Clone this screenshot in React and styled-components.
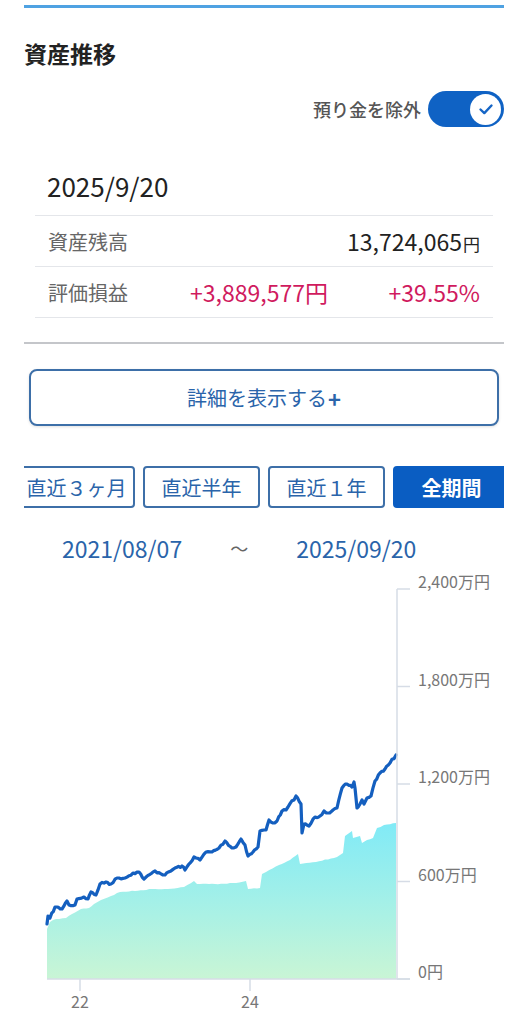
import React from "react";
import styled, { createGlobalStyle } from "styled-components";

const GlobalStyle = createGlobalStyle`
  body {
    margin: 0;
    background: #fff;
    font-family: "Noto Sans CJK JP", "Noto Sans", sans-serif;
    color: #222;
  }
`;

const BLUE = "#2a64aa";

const linePoints = [
  [47, 923], [48, 915], [50, 917], [55, 906], [62, 908], [67, 900], [69, 904],
  [75, 904], [77, 898], [84, 896], [88, 898], [91, 891], [96, 894], [100, 883],
  [106, 881], [111, 883], [117, 877], [125, 877], [133, 872], [139, 871],
  [144, 878], [155, 870], [165, 874], [175, 867], [182, 865], [185, 869],
  [194, 856], [200, 859], [206, 851], [212, 851], [219, 847], [225, 840],
  [232, 847], [236, 846], [241, 838], [245, 844], [248, 855], [253, 851],
  [258, 846], [260, 830], [266, 829], [269, 819], [273, 822], [277, 820],
  [282, 810], [286, 809], [296, 795], [301, 803], [302, 832], [304, 823],
  [309, 825], [315, 816], [320, 815], [324, 810], [328, 812], [333, 809],
  [337, 807], [342, 787], [347, 783], [352, 786], [354, 781], [355, 787],
  [357, 807], [360, 803], [362, 799], [364, 803], [367, 797], [371, 795],
  [375, 780], [380, 772], [385, 768], [390, 762], [396, 754],
];

const areaPoints = [
  [47, 928], [50, 921], [56, 918], [66, 917], [72, 913], [81, 908], [89, 907],
  [94, 903], [101, 899], [111, 895], [120, 891], [135, 890], [152, 888],
  [168, 888], [184, 886], [194, 880], [197, 883], [215, 883], [236, 882],
  [246, 880], [248, 888], [260, 887], [262, 873], [266, 871], [279, 864],
  [290, 859], [298, 853], [300, 863], [316, 861], [337, 856], [343, 852],
  [345, 835], [352, 830], [353, 837], [360, 835], [362, 842], [367, 839],
  [373, 837], [377, 827], [384, 824], [396, 822],
];

// small seeded jitter so the line looks like daily data
const jitter = (pts, step, amp) => {
  let seed = 7;
  const rnd = () => {
    seed = (seed * 16807) % 2147483647;
    return seed / 2147483647 - 0.5;
  };
  const out = [];
  for (let i = 0; i < pts.length - 1; i++) {
    const [x1, y1] = pts[i];
    const [x2, y2] = pts[i + 1];
    const n = Math.max(1, Math.round((x2 - x1) / step));
    for (let k = 0; k < n; k++) {
      const t = k / n;
      const noise = k === 0 ? 0 : rnd() * amp;
      out.push([x1 + (x2 - x1) * t, y1 + (y2 - y1) * t + noise]);
    }
  }
  out.push(pts[pts.length - 1]);
  return out;
};

const toPath = (pts) =>
  pts.map(([x, y], i) => `${i ? "L" : "M"}${x.toFixed(1)} ${y.toFixed(1)}`).join(" ");

const yTicks = [
  { v: "2,400万円", y: 588 },
  { v: "1,800万円", y: 685.5 },
  { v: "1,200万円", y: 783 },
  { v: "600万円", y: 880.5 },
  { v: "0円", y: 978 },
];

const xTicks = [
  { v: "22", x: 80 },
  { v: "24", x: 250 },
];

const tabs = ["直近３ヶ月", "直近半年", "直近１年", "全期間"];

const App = () => {
  const line = toPath(jitter(linePoints, 2, 2.2));
  const area =
    toPath(jitter(areaPoints, 3, 0.8)) + " L396 978 L47 978 Z";

  return (
    <>
      <GlobalStyle />
      <Page>
        <TopBar />
        <Title>資産推移</Title>
        <ToggleRow>
          <ToggleLabel>預り金を除外</ToggleLabel>
          <Toggle>
            <Knob>
              <svg width="20" height="20" viewBox="0 0 20 20">
                <path
                  d="M4.5 10.5l3.8 3.6 7.2-7.6"
                  fill="none"
                  stroke="#1565c6"
                  strokeWidth="2.4"
                  strokeLinecap="round"
                  strokeLinejoin="round"
                />
              </svg>
            </Knob>
          </Toggle>
        </ToggleRow>

        <Card>
          <DateRow>2025/9/20</DateRow>
          <Row>
            <Label>資産残高</Label>
            <Amount>
              13,724,065<Yen>円</Yen>
            </Amount>
          </Row>
          <Row>
            <Label>評価損益</Label>
            <Amount $gain>+3,889,577円</Amount>
            <Amount $gain $wide>
              +39.55%
            </Amount>
          </Row>
        </Card>

        <Separator />

        <DetailButton>
          詳細を表示する<Plus>+</Plus>
        </DetailButton>

        <TabStrip>
          <TabTrack>
            {tabs.map((t, i) => (
              <Tab key={t} $active={i === tabs.length - 1}>
                {t}
              </Tab>
            ))}
          </TabTrack>
        </TabStrip>

        <RangeRow>
          <span>2021/08/07</span>
          <Tilde>〜</Tilde>
          <span>2025/09/20</span>
        </RangeRow>

        <Chart width="480" height="463" viewBox="24 561 480 463">
          <defs>
            <linearGradient id="fill" x1="0" y1="820" x2="0" y2="978" gradientUnits="userSpaceOnUse">
              <stop offset="0" stopColor="#80eaf7" />
              <stop offset="0.5" stopColor="#a3f0e8" />
              <stop offset="1" stopColor="#c9f5d5" />
            </linearGradient>
          </defs>
          <path d={area} fill="url(#fill)" />
          <path
            d={line}
            fill="none"
            stroke="#145fbf"
            strokeWidth="3.2"
            strokeLinejoin="round"
            strokeLinecap="round"
          />
          <line x1="397" y1="588" x2="397" y2="978" stroke="#d6dce6" strokeWidth="1.5" />
          <line x1="47" y1="978" x2="410" y2="978" stroke="#d6dce6" strokeWidth="1.5" />
          {yTicks.map((t) => (
            <g key={t.v}>
              <line x1="397" y1={t.y} x2="410" y2={t.y} stroke="#d6dce6" strokeWidth="1.5" />
              <AxisText x="418" y={t.y - 8} dominantBaseline="central">
                {t.v}
              </AxisText>
            </g>
          ))}
          {xTicks.map((t) => (
            <g key={t.v}>
              <line x1={t.x} y1="978" x2={t.x} y2="990" stroke="#d6dce6" strokeWidth="1.5" />
              <AxisText x={t.x} y="1000" textAnchor="middle" dominantBaseline="central">
                {t.v}
              </AxisText>
            </g>
          ))}
        </Chart>
      </Page>
    </>
  );
};

export default App;

const Page = styled.div`
  width: 480px;
  padding: 0 24px;
`;

const TopBar = styled.div`
  height: 3px;
  margin-top: 5px;
  background: #4fa2e2;
`;

const Title = styled.h1`
  margin: 30px 0 0;
  font-size: 23px;
  line-height: 30px;
  font-weight: bold;
  color: #222;
`;

const ToggleRow = styled.div`
  margin-top: 23px;
  display: flex;
  justify-content: flex-end;
  align-items: center;
  gap: 7px;
`;

const ToggleLabel = styled.span`
  font-size: 18px;
  font-weight: 500;
  color: #555;
`;

const Toggle = styled.div`
  width: 76px;
  height: 36px;
  border-radius: 18px;
  background: #0f62c4;
  display: flex;
  justify-content: flex-end;
  align-items: center;
  padding-right: 3px;
  box-sizing: border-box;
`;

const Knob = styled.div`
  width: 31px;
  height: 31px;
  border-radius: 50%;
  background: #fff;
  display: flex;
  align-items: center;
  justify-content: center;
`;

const Card = styled.div`
  margin: 12px 11px 0;
`;

const DateRow = styled.div`
  padding: 30px 12px 12px;
  font-size: 26px;
  line-height: 34px;
  color: #222;
  border-bottom: 1px solid #e4e6ea;
`;

const Row = styled.div`
  height: 50px;
  padding: 0 13px 0 13px;
  display: flex;
  align-items: center;
  border-bottom: 1px solid #e4e6ea;
`;

const Label = styled.span`
  flex: 1;
  font-size: 20px;
  color: #666;
`;

const Amount = styled.span`
  font-size: 23px;
  color: ${({ $gain }) => ($gain ? "#d01a5e" : "#222")};
  width: ${({ $wide }) => ($wide ? "152px" : "auto")};
  text-align: right;
`;

const Yen = styled.span`
  font-size: 17px;
  margin-left: 1px;
`;

const Separator = styled.div`
  margin-top: 24px;
  height: 2px;
  background: #c4c6ca;
`;

const DetailButton = styled.button`
  display: flex;
  align-items: center;
  justify-content: center;
  width: calc(100% - 10px);
  height: 57px;
  margin: 25px 5px 0;
  border: 2px solid #3d6fa8;
  border-radius: 8px;
  background: #fff;
  box-shadow: 0 1px 3px rgba(0, 0, 0, 0.12);
  font-family: inherit;
  font-size: 20px;
  color: ${BLUE};
`;

const Plus = styled.span`
  font-weight: bold;
  font-size: 22px;
  margin-left: 1px;
`;

const TabStrip = styled.div`
  margin-top: 40px;
  overflow: hidden;
`;

const TabTrack = styled.div`
  display: flex;
  gap: 8px;
  margin-left: -6px;
`;

const Tab = styled.div`
  flex: 0 0 117px;
  height: 42px;
  box-sizing: border-box;
  display: flex;
  align-items: center;
  justify-content: center;
  border-radius: 4px;
  border: 2px solid ${({ $active }) => ($active ? "#0a5dc2" : "#3d6fa8")};
  background: ${({ $active }) => ($active ? "#0a5dc2" : "#fff")};
  color: ${({ $active }) => ($active ? "#fff" : BLUE)};
  font-weight: ${({ $active }) => ($active ? "bold" : "normal")};
  font-size: 20px;
  white-space: nowrap;
`;

const RangeRow = styled.div`
  margin-top: 26px;
  height: 28px;
  display: flex;
  align-items: center;
  gap: 48px;
  padding-left: 38px;
  font-size: 23px;
  color: ${BLUE};
`;

const Tilde = styled.span`
  color: #666;
  font-size: 18px;
`;

const Chart = styled.svg`
  display: block;
`;

const AxisText = styled.text`
  font-family: "Noto Sans CJK JP", "Noto Sans", sans-serif;
  font-size: 16px;
  fill: #777;
`;
